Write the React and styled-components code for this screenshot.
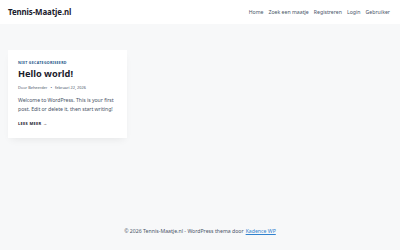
import React from 'react';
import styled, { createGlobalStyle } from 'styled-components';

const Global = createGlobalStyle`
  html, body { margin: 0; padding: 0; }
  body {
    background: #f7f8f9;
    font-family: "Noto Sans", "Open Sans", sans-serif;
    color: #2d3748;
  }
`;

const Page = styled.div`
  width: 400px;
  height: 250px;
  display: flex;
  flex-direction: column;
`;

const Header = styled.header`
  height: 24px;
  background: #fff;
  display: flex;
  align-items: center;
  justify-content: space-between;
  padding: 0 8px;
  box-sizing: border-box;
`;

const SiteTitle = styled.div`
  font-size: 7.9px;
  font-weight: 700;
  color: #1a202c;
  letter-spacing: -0.1px;
`;

const Nav = styled.nav`
  display: flex;
  gap: 5px;
  padding-right: 2px;
`;

const NavLink = styled.a`
  font-size: 5.2px;
  color: #4a5568;
  text-decoration: none;
`;

const Main = styled.main`
  flex: 1;
  padding: 26px 8px 0;
`;

const Card = styled.article`
  width: 119px;
  background: #fff;
  box-shadow: 0 4px 8px -3px rgba(0, 0, 0, 0.08);
  padding: 10px 8px 12px 10px;
  box-sizing: border-box;
`;

const Category = styled.div`
  font-size: 3.6px;
  font-weight: 700;
  letter-spacing: 0.3px;
  color: #215387;
  text-transform: uppercase;
`;

const Title = styled.h2`
  margin: 3px 0 0;
  font-size: 9.2px;
  font-weight: 700;
  color: #1a202c;
  line-height: 1.3;
`;

const Meta = styled.div`
  margin-top: 5px;
  font-size: 3.9px;
  color: #4a5568;
  display: flex;
  gap: 3px;
  align-items: center;
`;

const Excerpt = styled.p`
  margin: 6px 0 0;
  font-size: 5.2px;
  line-height: 9px;
  color: #4a5568;
  letter-spacing: -0.05px;
`;

const More = styled.a`
  display: block;
  margin-top: 7px;
  font-size: 4px;
  font-weight: 700;
  letter-spacing: 0.3px;
  color: #1a202c;
  text-transform: uppercase;
`;

const Footer = styled.footer`
  height: 25px;
  display: flex;
  justify-content: center;
  align-items: flex-start;
  padding-top: 2px;
  box-sizing: border-box;
  font-size: 5.2px;
  color: #4a5568;
`;

const FooterLink = styled.a`
  color: #3182ce;
  text-decoration: underline;
  margin-left: 2px;
`;

export default function App() {
  return (
    <Page>
      <Global />
      <Header>
        <SiteTitle>Tennis-Maatje.nl</SiteTitle>
        <Nav>
          {['Home', 'Zoek een maatje', 'Registreren', 'Login', 'Gebruiker'].map((n) => (
            <NavLink key={n}>{n}</NavLink>
          ))}
        </Nav>
      </Header>
      <Main>
        <Card>
          <Category>Niet gecategoriseerd</Category>
          <Title>Hello world!</Title>
          <Meta>
            <span>Door Beheerder</span>
            <span>•</span>
            <span>februari 22, 2026</span>
          </Meta>
          <Excerpt>
            Welcome to WordPress. This is your first post. Edit or delete it, then start writing!
          </Excerpt>
          <More>Lees meer →</More>
        </Card>
      </Main>
      <Footer>
        © 2026 Tennis-Maatje.nl - WordPress thema door<FooterLink>Kadence WP</FooterLink>
      </Footer>
    </Page>
  );
}
